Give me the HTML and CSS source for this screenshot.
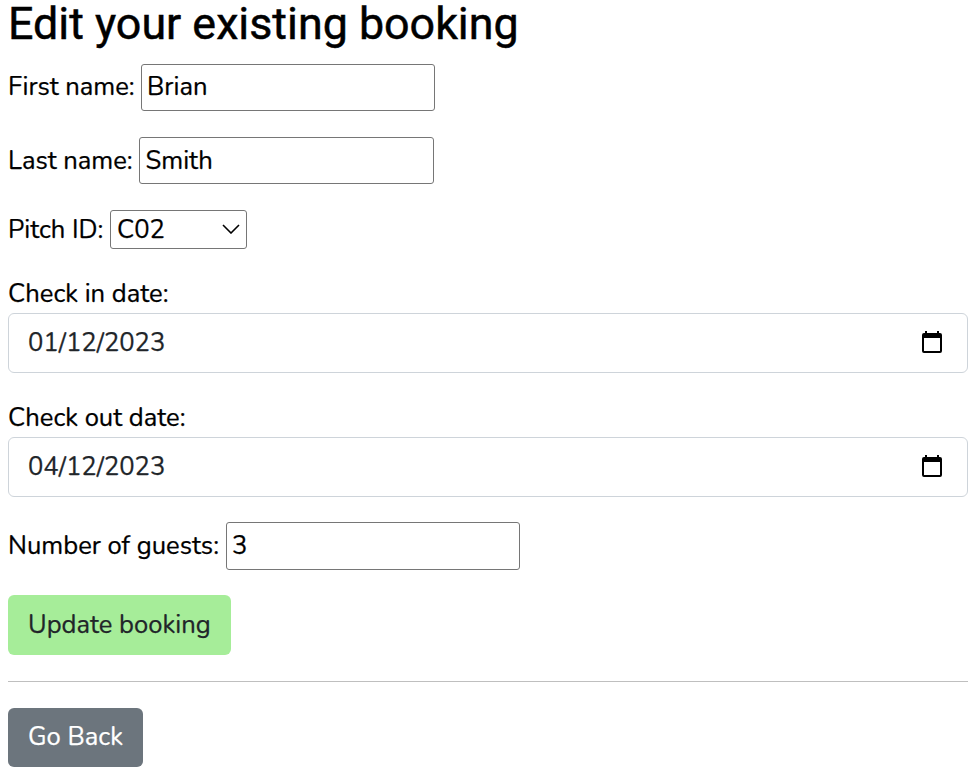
FILE: index.html
```
<!DOCTYPE html>
<html lang="en">
<head>
<meta charset="utf-8">
<title>Edit your existing booking</title>
<link rel="stylesheet" href="styles.css">
</head>
<body>
<h1>Edit your existing booking</h1>
<form class="booking">
  <div class="row first">
    <label for="first">First name:</label>
    <input id="first" class="field" type="text" value="Brian">
  </div>
  <div class="row last">
    <label for="last">Last name:</label>
    <input id="last" class="field" type="text" value="Smith">
  </div>
  <div class="row pitch">
    <label for="pitch">Pitch ID:</label>
    <div class="picker">
      <select id="pitch"><option>C02</option></select>
      <svg class="chevron" viewBox="0 0 18 10" width="18" height="10"><path d="M1 1l8 8 8-8" fill="none" stroke="#000" stroke-width="1.6"/></svg>
    </div>
  </div>
  <div class="dates checkin">
    <label for="in">Check in date:</label>
    <div class="date">
      <input id="in" type="text" value="01/12/2023">
      <svg viewBox="0 0 20 22" width="20" height="22"><path fill-rule="evenodd" d="M3 0h2v2h10V0h2v2h1q2 0 2 2v16q0 2-2 2H2q-2 0-2-2V4q0-2 2-2h1zM2 7v13h16V7z"/></svg>
    </div>
  </div>
  <div class="dates checkout">
    <label for="out">Check out date:</label>
    <div class="date">
      <input id="out" type="text" value="04/12/2023">
      <svg viewBox="0 0 20 22" width="20" height="22"><path fill-rule="evenodd" d="M3 0h2v2h10V0h2v2h1q2 0 2 2v16q0 2-2 2H2q-2 0-2-2V4q0-2 2-2h1zM2 7v13h16V7z"/></svg>
    </div>
  </div>
  <div class="row guests">
    <label for="guests">Number of guests:</label>
    <input id="guests" class="field" type="text" value="3">
  </div>
  <button class="btn update" type="button">Update booking</button>
</form>
<hr>
<button class="btn back" type="button">Go Back</button>
</body>
</html>
```
FILE: styles.css
```
* { box-sizing: border-box; }
body {
  margin: 0;
  padding: 0 12px 0 8px;
  background: #fff;
  color: #000;
  font: 25.6px/38px Nunito, Lato, sans-serif;
  -webkit-text-stroke: 0.25px currentColor;
}
h1 {
  margin: 0 0 17px;
  height: 47px;
  font: 400 44.8px/47px Roboto, sans-serif;
  -webkit-text-stroke: 0.5px #000;
  white-space: nowrap;
}
label { white-space: nowrap; }
input, select, button { font: inherit; letter-spacing: inherit; color: inherit; margin: 0; }
.booking { display: flex; flex-direction: column; }
.row { display: flex; align-items: center; margin-bottom: 26px; }
.row label { flex: none; }
.first label { width: 133px; padding-bottom: 2px; }
.last label { width: 131px; }
.pitch label { width: 102px; }
.guests label { width: 218px; }
.field {
  width: 294px;
  height: 47px;
  padding: 0 5px;
  border: 1px solid #767676;
  border-radius: 3px;
  background: #fff;
}
.first .field { padding-bottom: 2px; }
.last .field { width: 295px; padding-left: 5.5px; }
.guests .field { height: 48px; padding-bottom: 1px; }
.picker { position: relative; width: 137px; height: 39px; }
.picker select {
  appearance: none;
  display: block;
  width: 100%;
  height: 100%;
  padding: 0 6px;
  border: 1px solid #767676;
  border-radius: 3px;
  background: #fff;
}
.chevron { position: absolute; right: 7px; top: 14px; }
.dates { display: flex; flex-direction: column; margin-bottom: 26px; }
.dates label { height: 38px; }
.date {
  display: flex;
  align-items: center;
  height: 60px;
  padding: 0 25px 2px 19px;
  border: 1px solid #ced4da;
  border-radius: 6px;
  color: #212529;
}
.date input { flex: 1; padding: 0; border: 0; background: none; height: 56px; }
.date svg { fill: #000; }
.checkout { margin-bottom: 25px; }
.guests { margin-bottom: 25px; }
.btn {
  display: block;
  height: 60px;
  padding: 0 0 0 20px;
  border: 0;
  border-radius: 6px;
  text-align: left;
  white-space: nowrap;
}
.update { width: 223px; background: #a6ed99; color: #212529; }
.back { width: 135px; height: 59px; padding-bottom: 2px; background: #6c757d; color: #fff; }
hr { margin: 26px 0; border: 0; height: 1px; background: #bfbfbf; }
```
